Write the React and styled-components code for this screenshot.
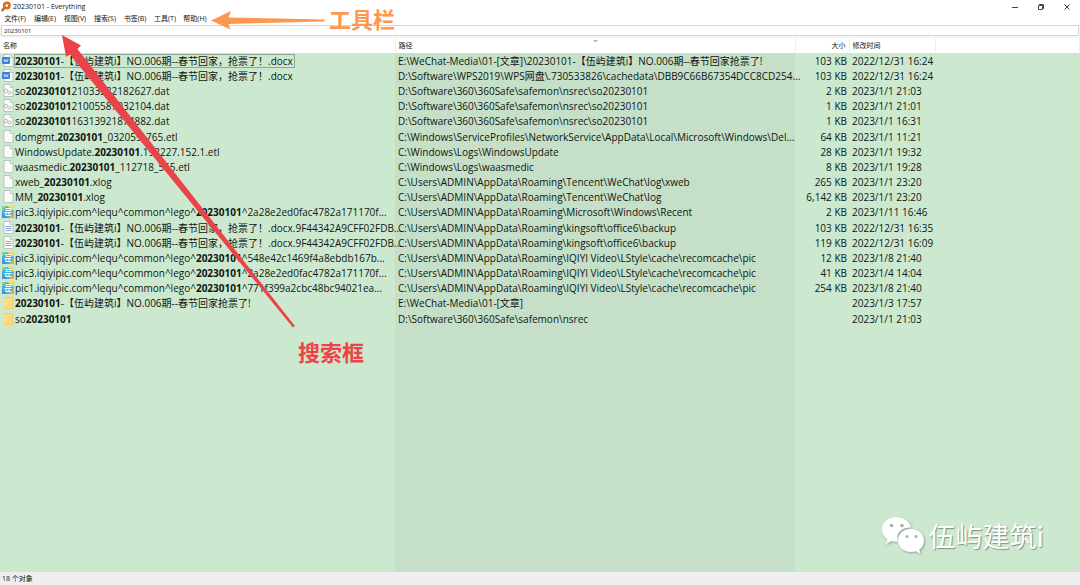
import React from 'react';
import styled, { createGlobalStyle } from 'styled-components';

const QUERY = '20230101';

const menus = ['文件(F)', '编辑(E)', '视图(V)', '搜索(S)', '书签(B)', '工具(T)', '帮助(H)'];

const NSREC = 'D:\\Software\\360\\360Safe\\safemon\\nsrec';
const ROAMING = 'C:\\Users\\ADMIN\\AppData\\Roaming';
const PIC_CACHE = `${ROAMING}\\IQIYI Video\\LStyle\\cache\\recomcache\\pic`;

const files = [
  { icon: 'word', name: '20230101-【伍屿建筑i】NO.006期--春节回家，抢票了！.docx', path: 'E:\\WeChat-Media\\01-[文章]\\20230101-【伍屿建筑i】NO.006期--春节回家抢票了!', size: '103 KB', date: '2022/12/31 16:24' },
  { icon: 'word', name: '20230101-【伍屿建筑i】NO.006期--春节回家，抢票了！.docx', path: 'D:\\Software\\WPS2019\\WPS网盘\\.730533826\\cachedata\\DBB9C66B67354DCC8CD254...', size: '103 KB', date: '2022/12/31 16:24' },
  { icon: 'data', name: 'so2023010121033582182627.dat', path: `${NSREC}\\so20230101`, size: '2 KB', date: '2023/1/1 21:03' },
  { icon: 'data', name: 'so2023010121005587032104.dat', path: `${NSREC}\\so20230101`, size: '1 KB', date: '2023/1/1 21:01' },
  { icon: 'data', name: 'so2023010116313921874882.dat', path: `${NSREC}\\so20230101`, size: '1 KB', date: '2023/1/1 16:31' },
  { icon: 'blank', name: 'domgmt.20230101_032059_765.etl', path: 'C:\\Windows\\ServiceProfiles\\NetworkService\\AppData\\Local\\Microsoft\\Windows\\Del...', size: '64 KB', date: '2023/1/1 11:21' },
  { icon: 'blank', name: 'WindowsUpdate.20230101.192227.152.1.etl', path: 'C:\\Windows\\Logs\\WindowsUpdate', size: '28 KB', date: '2023/1/1 19:32' },
  { icon: 'blank', name: 'waasmedic.20230101_112718_555.etl', path: 'C:\\Windows\\Logs\\waasmedic', size: '8 KB', date: '2023/1/1 19:28' },
  { icon: 'blank', name: 'xweb_20230101.xlog', path: `${ROAMING}\\Tencent\\WeChat\\log\\xweb`, size: '265 KB', date: '2023/1/1 23:20' },
  { icon: 'blank', name: 'MM_20230101.xlog', path: `${ROAMING}\\Tencent\\WeChat\\log`, size: '6,142 KB', date: '2023/1/1 23:20' },
  { icon: 'picture', name: 'pic3.iqiyipic.com^lequ^common^lego^20230101^2a28e2ed0fac4782a171170f...', path: `${ROAMING}\\Microsoft\\Windows\\Recent`, size: '2 KB', date: '2023/1/11 16:46' },
  { icon: 'text', name: '20230101-【伍屿建筑i】NO.006期--春节回家，抢票了！.docx.9F44342A9CFF02FDB...', path: `${ROAMING}\\kingsoft\\office6\\backup`, size: '103 KB', date: '2022/12/31 16:35' },
  { icon: 'text', name: '20230101-【伍屿建筑i】NO.006期--春节回家，抢票了！.docx.9F44342A9CFF02FDB...', path: `${ROAMING}\\kingsoft\\office6\\backup`, size: '119 KB', date: '2022/12/31 16:09' },
  { icon: 'picture', name: 'pic3.iqiyipic.com^lequ^common^lego^20230101^548e42c1469f4a8ebdb167b...', path: PIC_CACHE, size: '12 KB', date: '2023/1/8 21:40' },
  { icon: 'picture', name: 'pic3.iqiyipic.com^lequ^common^lego^20230101^2a28e2ed0fac4782a171170f...', path: PIC_CACHE, size: '41 KB', date: '2023/1/4 14:04' },
  { icon: 'picture', name: 'pic1.iqiyipic.com^lequ^common^lego^20230101^771f399a2cbc48bc94021ea...', path: PIC_CACHE, size: '254 KB', date: '2023/1/8 21:40' },
  { icon: 'folder', name: '20230101-【伍屿建筑i】NO.006期--春节回家抢票了!', path: 'E:\\WeChat-Media\\01-[文章]', size: '', date: '2023/1/3 17:57' },
  { icon: 'folder', name: 'so20230101', path: NSREC, size: '', date: '2023/1/1 21:03' },
];

const FileIcon = ({ type }) => {
  if (type === 'folder') {
    return (
      <svg width="12" height="13" viewBox="0 0 12 13" aria-hidden="true">
        <path d="M2 1h7l1 1h1v11H2z" fill="#f3cb62" />
        <path d="M3 2h7v10H2V3z" fill="#fbdc86" />
      </svg>
    );
  }
  if (type === 'picture') {
    return (
      <svg width="12" height="13" viewBox="0 0 12 13" aria-hidden="true">
        <path d="M0 1h12v12H0z" fill="#35b6e4" />
        <path d="M0 1h5L0 6z" fill="#7fd4a0" />
        <path d="M5 1h7v5z" fill="#f5dc4c" />
        <path d="M0 8l5 5H0z" fill="#4b8de0" />
        <path d="M12 6v7H7z" fill="#f0a63e" />
        <path d="M4 3.5h5v2H4zM2.5 7.5h7M4 7.5v3.5M4 10.5h5M7 7.5v3" stroke="#fff" fill="none" />
      </svg>
    );
  }
  return (
    <svg width="12" height="13" viewBox="0 0 12 13" aria-hidden="true">
      <path d="M2 .5h6l3 3v9H2z" fill="#fbfcfb" stroke="#a9b3aa" strokeWidth=".7" />
      <path d="M8 .5v3h3" fill="#e6eae7" stroke="#a9b3aa" strokeWidth=".6" />
      {type === 'word' && (
        <>
          <rect x="0" y="3" width="8" height="7" rx="1" fill="#3f7fe0" />
          <path d="M1.8 5l1 3L4 5.5 5.200 8l1-3" stroke="#dfeafc" strokeWidth=".8" fill="none" />
        </>
      )}
      {type === 'data' && (
        <g fill="none" stroke="#b4bab6" strokeWidth=".9">
          <circle cx="4" cy="7" r="1.7" />
          <circle cx="7.5" cy="8.5" r="1.5" />
          <path d="M4 4.5v1M1.5 7h1M9 8.5h1M7.5 10v1" />
        </g>
      )}
      {type === 'text' && (
        <path d="M3.5 5.5h6M3.5 7.5h6M3.5 9.5h6" stroke="#6f8fd0" strokeWidth=".8" />
      )}
    </svg>
  );
};

const Highlight = ({ text }) => {
  const [before, after] = text.split(QUERY);

  return (
    <>
      {before}
      <b>{QUERY}</b>
      {after}
    </>
  );
};

const App = () => (
  <Window>
    <GlobalStyle />
    <TitleBar>
      <svg width="10" height="11" viewBox="0 0 10 11" aria-hidden="true">
        <path d="M3.6 6.8L1.4 9.3" stroke="#c9641a" strokeWidth="2.4" strokeLinecap="round" />
        <circle cx="5.8" cy="4.6" r="2.7" fill="#fff" stroke="#d9701c" strokeWidth="2.6" />
      </svg>
      <Title>20230101 - Everything</Title>
      <WindowButton aria-label="最小化">
        <svg width="8" height="8" viewBox="0 0 8 8"><path d="M1 4.5h6" /></svg>
      </WindowButton>
      <WindowButton aria-label="还原">
        <svg width="8" height="8" viewBox="0 0 8 8"><path d="M1.5 2.5h4v4h-4zM2.5 2.5v-1h4v4h-1" /></svg>
      </WindowButton>
      <WindowButton aria-label="关闭">
        <svg width="8" height="8" viewBox="0 0 8 8"><path d="M1.5 1.5l5 5M6.5 1.5l-5 5" /></svg>
      </WindowButton>
    </TitleBar>

    <MenuBar>
      {menus.map((menu) => (
        <MenuButton key={menu}>{menu}</MenuButton>
      ))}
    </MenuBar>

    <SearchBar>
      <SearchInput aria-label="搜索" defaultValue={QUERY} />
    </SearchBar>

    <Results>
      <Table>
        <colgroup>
          <Col $width={395} />
          <Col $width={400} />
          <Col $width={54} />
          <Col $width={86} />
          <col />
        </colgroup>
        <thead>
          <tr>
            <HeadCell>名称</HeadCell>
            <HeadCell>
              <HeadLabel>
                路径
                <svg width="5" height="3" viewBox="0 0 5 3" aria-hidden="true">
                  <path d="M0 0h5L2.5 2.5z" fill="#b4b8b4" />
                </svg>
              </HeadLabel>
            </HeadCell>
            <HeadCell $right>大小</HeadCell>
            <HeadCell>修改时间</HeadCell>
            <HeadCell as="td" />
          </tr>
        </thead>
        <tbody>
          {files.map((file, index) => (
            <Row key={index}>
              <Cell $flush>
                <FileName>
                  <FileIcon type={file.icon} />
                  <Label $focused={index === 0}>
                    <Highlight text={file.name} />
                  </Label>
                </FileName>
              </Cell>
              <Cell>{file.path}</Cell>
              <Cell $right>{file.size}</Cell>
              <Cell>{file.date}</Cell>
              <Cell />
            </Row>
          ))}
        </tbody>
      </Table>
    </Results>

    <StatusBar>18 个对象</StatusBar>

    <Arrows width="400" height="340" viewBox="0 0 400 340" aria-hidden="true">
      <path d="M211 20.5L231 11L228.5 17.5L324 19.5Q326 20.5 324 21.5L228.5 24L230.5 29.5Z" fill="#fd9850" />
      <path d="M62 35L81 45.5L77.5 49L294.5 325.5Q294.5 328 292.5 327L70 54.5L66 57Z" fill="#e9444a" />
    </Arrows>
    <Note $x={329} $y={4} $color="#fd9850">工具栏</Note>
    <Note $x={298} $y={337} $color="#ee4348">搜索框</Note>

    <Watermark>
      <svg width="44" height="40" viewBox="0 0 44 40" aria-hidden="true">
        <path d="M15 1C7 1 1 6.5 1 13.5c0 4 2 7.5 5.5 9.8L5 28l5.500-3c2 .6 4 .8 6.5.7C14 17 21 11 30 11.5 28.5 5 22.5 1 15 1z" fill="#fff" />
        <path d="M30 13c-7.500 0-13 5-13 11.5S22.5 36 30 36c1.8 0 3.4-.3 5-.8l4.5 2.6-1.2-4C41.4 31.5 43 28.3 43 24.5 43 18 37.5 13 30 13z" fill="#fff" />
        <g fill="#9fb5a2">
          <circle cx="10.5" cy="9.5" r="1.7" />
          <circle cx="21" cy="9.5" r="1.7" />
          <circle cx="26" cy="20.5" r="1.5" />
          <circle cx="35" cy="20.5" r="1.5" />
        </g>
      </svg>
      伍屿建筑i
    </Watermark>
  </Window>
);

const GlobalStyle = createGlobalStyle`
  * {
    box-sizing: border-box;
  }

  body {
    margin: 0;
    background-color: #fff;
    color: #101611;
    font-family: 'Open Sans', 'Noto Sans CJK SC', sans-serif;
    font-size: 7px;
  }

  button,
  input {
    margin: 0;
    padding: 0;
    border: 0;
    background: none;
    color: inherit;
    font: inherit;
  }
`;

const Window = styled.div`
  position: relative;
  display: flex;
  flex-direction: column;
  height: 100vh;
  overflow: hidden;
`;

const TitleBar = styled.header`
  display: flex;
  align-items: center;
  height: 13px;
  padding-left: 1px;
`;

const Title = styled.h1`
  flex: 1;
  margin: 0 0 0 2px;
  font-size: 7px;
  font-weight: 400;
`;

const WindowButton = styled.button`
  display: flex;
  align-items: center;
  justify-content: center;
  width: 26px;
  height: 12px;

  path {
    fill: none;
    stroke: #444;
  }
`;

const MenuBar = styled.nav`
  display: flex;
  height: 12px;
`;

const MenuButton = styled.button`
  width: 30px;
  line-height: 12px;
  white-space: nowrap;
`;

const SearchBar = styled.div`
  display: flex;
  height: 13px;
  padding: 0 1px 2px;
  background-color: #f3f7f4;
`;

const SearchInput = styled.input`
  flex: 1;
  min-width: 0;
  padding-left: 2px;
  border: 1px solid #d3d8d4;
  background-color: #fff;
  font-size: 6px;
`;

const Results = styled.main`
  flex: 1;
  min-height: 0;
  overflow: hidden;
  background: linear-gradient(
    to right,
    #cce8cf 395px,
    #c5dfc8 395px 795px,
    #cce8cf 795px
  );
`;

const Table = styled.table`
  width: 100%;
  table-layout: fixed;
  border-collapse: collapse;
`;

const Col = styled.col`
  width: ${(props) => props.$width}px;
`;

const HeadCell = styled.th`
  height: 15px;
  padding: 1px 3px 0;
  border-right: 1px solid #ecf0ed;
  background-color: #fff;
  font-weight: 400;
  line-height: 14px;
  text-align: ${(props) => (props.$right ? 'right' : 'left')};
`;

const HeadLabel = styled.div`
  display: grid;
  grid-template-columns: 1fr auto 1fr;

  svg {
    margin-top: 1px;
  }
`;

/* the rows are slightly taller than 15px, so every sixth takes the spare pixel */
const Row = styled.tr`
  height: 15px;

  &:nth-child(6n) {
    height: 16px;
  }
`;

const Cell = styled.td`
  padding: ${(props) => (props.$flush ? '1px 0 0' : '1px 2px 0 3px')};
  font-size: 10px;
  line-height: 14px;
  text-align: ${(props) => (props.$right ? 'right' : 'left')};
  white-space: nowrap;
`;

const FileName = styled.div`
  display: flex;
  align-items: flex-start;
  padding-left: 2px;

  svg {
    flex: none;
  }
`;

const Label = styled.span`
  padding-right: 2px;
  padding-left: 1px;
  outline: ${(props) => (props.$focused ? '1px solid #8fa892' : 'none')};
  outline-offset: -1px;
`;

const StatusBar = styled.footer`
  height: 13px;
  padding-left: 2px;
  background-color: #eeefee;
  line-height: 13px;
`;

const Arrows = styled.svg`
  position: absolute;
  top: 0;
  left: 0;
  pointer-events: none;
`;

const Note = styled.strong`
  position: absolute;
  top: ${(props) => props.$y}px;
  left: ${(props) => props.$x}px;
  color: ${(props) => props.$color};
  font-family: 'Noto Sans CJK SC', sans-serif;
  font-size: 22px;
  line-height: 28px;
`;

const Watermark = styled.div`
  position: absolute;
  right: 36px;
  bottom: 29px;
  display: flex;
  align-items: center;
  gap: 4px;
  color: #fff;
  font-family: 'Noto Sans CJK SC', sans-serif;
  font-size: 27px;
  line-height: 40px;
  text-shadow: 1px 1px 1px #7f9182;

  svg {
    filter: drop-shadow(1px 1px 1px #8fa392);
  }
`;

export default App;
